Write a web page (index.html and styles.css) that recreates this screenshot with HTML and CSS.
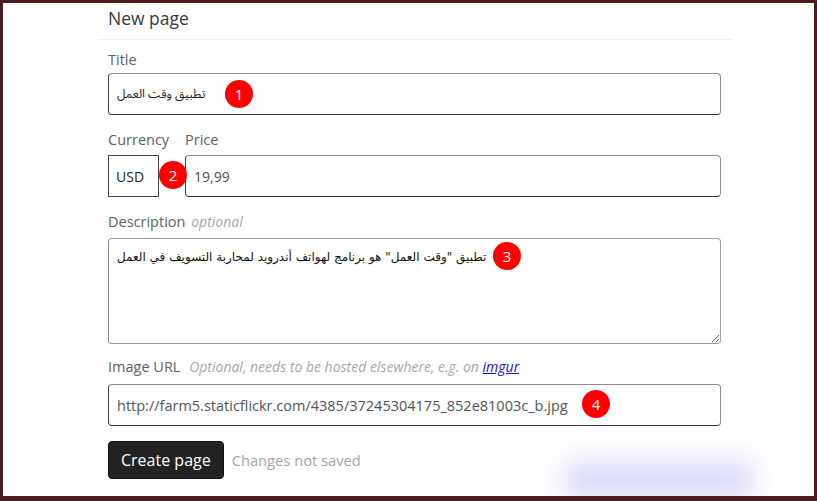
FILE: index.html
```html
<!DOCTYPE html>
<html lang="en">
<head>
  <meta charset="UTF-8" />
  <title>New page</title>
  <link rel="stylesheet" href="styles.css">
</head>
<body>
  <div class="frame">
    <div class="panel">
      <div class="panel-header">New page</div>

      <form class="panel-body">
        <div class="field field-title">
          <label class="label">Title</label>
          <div class="control">
            <input class="input arabic" type="text" value="تطبيق وقت العمل" dir="ltr">
            <span class="badge badge-title">1</span>
          </div>
        </div>

        <div class="field field-price row">
          <div class="col currency">
            <label class="label">Currency</label>
            <input class="input input-square" type="text" value="USD">
          </div>
          <div class="col price">
            <label class="label">Price</label>
            <input class="input" type="text" value="19,99">
          </div>
          <span class="badge badge-currency">2</span>
        </div>

        <div class="field field-desc">
          <label class="label">Description <em class="hint">optional</em></label>
          <div class="control">
            <textarea class="input textarea" dir="ltr">تطبيق "وقت العمل" هو برنامج لهواتف أندرويد لمحاربة التسويف في العمل</textarea>
            <span class="badge badge-desc">3</span>
          </div>
        </div>

        <div class="field field-url">
          <label class="label">Image URL <em class="hint">Optional, needs to be hosted elsewhere, e.g. on <a href="#">imgur</a></em></label>
          <div class="control">
            <input class="input url" type="text" value="http://farm5.staticflickr.com/4385/37245304175_852e81003c_b.jpg">
            <span class="badge badge-url">4</span>
          </div>
        </div>

        <div class="actions">
          <button class="btn" type="button">Create page</button>
          <span class="status">Changes not saved</span>
        </div>
      </form>
    </div>

    <!-- blurred thing in the bottom corner -->
    <div class="smudge"></div>
  </div>
</body>
</html>
```

FILE: styles.css
```css
html, body {
    margin: 0;
    padding: 0;
    height: 100%;
    background: #4d1c1e;
}

.frame {
    position: relative;
    box-sizing: border-box;
    height: 493px;
    margin: 3px 3px 0 3px;
    width: 811px;
    background: #fff;
    overflow: hidden;
    font-family: "Open Sans", "DejaVu Sans", sans-serif;
}

.panel {
    width: 634px;
    margin-left: 95px;
}

.panel-header {
    height: 36px;
    line-height: 31px;
    padding-left: 10px;
    font-size: 17.5px;
    color: #353b41;
    border-bottom: 1px solid #f1f1f1;
}

.panel-body {
    padding: 10px 11px 0 10px;
}

/* spacing per field, tuned by eye */
.field-title .label { margin-bottom: 3px; }
.field-price { margin-top: 15px; }
.field-price .label { margin-bottom: 5px; }
.field-desc { margin-top: 15px; }
.field-desc .label { margin-bottom: 6px; }
.field-url { margin-top: 13px; }
.field-url .label { margin-bottom: 7px; }

.label {
    display: block;
    font-size: 14.5px;
    line-height: 20px;
    color: #5b6268;
}

.hint {
    font-size: 14px;
    color: #a3a8ad;
    margin-left: 5px;
}

.field-desc .hint {
    margin-left: 2px;
}

.hint a {
    color: #1a0dcc;
}

.control {
    position: relative;
}

.input {
    display: block;
    box-sizing: border-box;
    width: 100%;
    height: 42px;
    padding: 0 8px;
    font-family: "Open Sans", "DejaVu Sans", sans-serif;
    font-size: 14px;
    color: #4a4f54;
    background: #fff;
    border: 1px solid #8c8c8c;
    border-left-color: #444;
    border-bottom-color: #333;
    border-radius: 4px;
    outline: none;
}

.arabic {
    font-family: "Noto Sans Arabic", "Noto Naskh Arabic", "DejaVu Sans", sans-serif;
    font-size: 12px;
    color: #1e1e1e;
}

.row {
    position: relative;
    display: flex;
    gap: 26px;
}

.currency {
    width: 51px;
}

.price {
    flex: 1;
}

.input-square {
    border-radius: 0;
    border-color: #444;
    padding: 0 7px;
    color: #222;
}

.textarea {
    height: 106px;
    padding: 8px 8px;
    resize: vertical;
    line-height: 20px;
    font-family: "DejaVu Sans", sans-serif;
    font-size: 12px;
    color: #111;
    border-color: #a0a0a0;
    border-left-color: #8a8a8a;
    border-bottom-color: #9a9a9a;
}

.url {
    font-size: 14.5px;
    color: #505559;
}

.badge {
    position: absolute;
    width: 28px;
    height: 28px;
    border-radius: 50%;
    background: #ff0000;
    color: #fff;
    font-size: 15px;
    line-height: 28px;
    text-align: center;
}

.badge-title {
    left: 117px;
    top: 7px;
}

.badge-currency {
    left: 51px;
    top: 31px;
}

.badge-desc {
    left: 385px;
    top: 4px;
}

.badge-url {
    left: 474px;
    top: 6px;
}

.actions {
    display: flex;
    align-items: center;
    margin-top: 15px;
}

.btn {
    height: 38px;
    padding: 0 12px;
    font-family: "Open Sans", sans-serif;
    font-size: 16px;
    color: #fff;
    background: #222;
    border: 1px solid #111;
    border-radius: 4px;
}

.status {
    margin-left: 8px;
    font-size: 14.7px;
    color: #a2a6aa;
}

.smudge {
    position: absolute;
    left: 562px;
    top: 458px;
    width: 188px;
    height: 38px;
    background: #dadaf9;
    filter: blur(13px);
}
```
